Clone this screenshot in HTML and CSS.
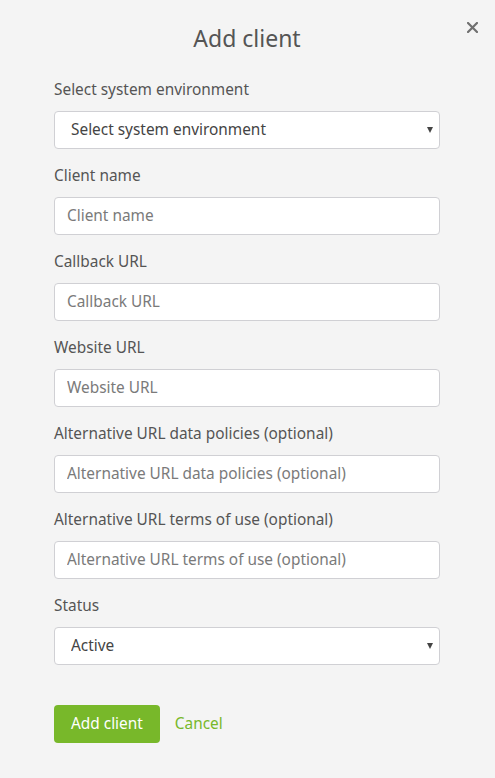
FILE: index.html
```html
<!DOCTYPE html>
<html lang="en">
<head>
<meta charset="utf-8">
<title>Add client</title>
<link rel="stylesheet" href="styles.css">
</head>
<body>
<div class="modal">
  <button class="close" aria-label="Close">
    <svg width="11" height="11" viewBox="0 0 11 11"><path d="M1 1L10 10M10 1L1 10" stroke="#707070" stroke-width="2.2" stroke-linecap="square"/></svg>
  </button>
  <h1 class="title">Add client</h1>
  <form class="form">
    <div class="field">
      <label class="label">Select system environment</label>
      <div class="select-wrap">
        <select class="control select"><option>Select system environment</option></select>
        <span class="arrow"></span>
      </div>
    </div>
    <div class="field">
      <label class="label">Client name</label>
      <input class="control" type="text" placeholder="Client name">
    </div>
    <div class="field">
      <label class="label">Callback URL</label>
      <input class="control" type="text" placeholder="Callback URL">
    </div>
    <div class="field">
      <label class="label">Website URL</label>
      <input class="control" type="text" placeholder="Website URL">
    </div>
    <div class="field">
      <label class="label">Alternative URL data policies (optional)</label>
      <input class="control" type="text" placeholder="Alternative URL data policies (optional)">
    </div>
    <div class="field">
      <label class="label">Alternative URL terms of use (optional)</label>
      <input class="control" type="text" placeholder="Alternative URL terms of use (optional)">
    </div>
    <div class="field">
      <label class="label">Status</label>
      <div class="select-wrap">
        <select class="control select"><option>Active</option></select>
        <span class="arrow"></span>
      </div>
    </div>
    <div class="actions">
      <button type="button" class="btn-primary">Add client</button>
      <a class="cancel" href="#">Cancel</a>
    </div>
  </form>
</div>
</body>
</html>
```

FILE: styles.css
```css
* { box-sizing: border-box; }
html, body {
  margin: 0;
  padding: 0;
  background: #f4f4f4;
  font-family: "Noto Sans", "Open Sans", sans-serif;
  color: #555;
}
.modal {
  position: relative;
  width: 495px;
  min-height: 778px;
  padding: 23px 55px 0 54px;
}
.close {
  position: absolute;
  top: 21px;
  right: 17px;
  width: 12px;
  height: 12px;
  padding: 0;
  border: 0;
  background: transparent;
  display: flex;
  align-items: center;
  justify-content: center;
}
.title {
  margin: 0 0 27px;
  font-size: 23px;
  line-height: 30px;
  font-weight: 400;
  text-align: center;
  color: #555;
}
.form {
  display: flex;
  flex-direction: column;
}
.field {
  display: flex;
  flex-direction: column;
  margin-bottom: 17px;
}
.label {
  font-size: 15.4px;
  line-height: 19px;
  color: #555;
  margin-bottom: 12px;
}
.control {
  width: 386px;
  height: 38px;
  border: 1px solid #d0d0d4;
  border-radius: 4px;
  background: #fff;
  font-family: inherit;
  font-size: 15.4px;
  color: #444;
  padding: 0 12px 2px;
  outline: none;
}
.control::placeholder { color: #7a7a7a; }
.select-wrap { position: relative; }
.select {
  appearance: none;
  -webkit-appearance: none;
  padding-left: 16px;
  color: #444;
}
.arrow {
  position: absolute;
  right: 7px;
  top: 16px;
  width: 0;
  height: 0;
  border-left: 3.5px solid transparent;
  border-right: 3.5px solid transparent;
  border-top: 6px solid #444;
}
.actions {
  display: flex;
  align-items: center;
  gap: 15px;
  margin-top: 23px;
}
.btn-primary {
  height: 38px;
  padding: 0 17px 2px;
  border: 0;
  border-radius: 4px;
  background: #78b82a;
  color: #fff;
  font-family: inherit;
  font-size: 15.4px;
}
.cancel {
  color: #78b82a;
  font-size: 15.4px;
  text-decoration: none;
  padding-bottom: 2px;
}
```
